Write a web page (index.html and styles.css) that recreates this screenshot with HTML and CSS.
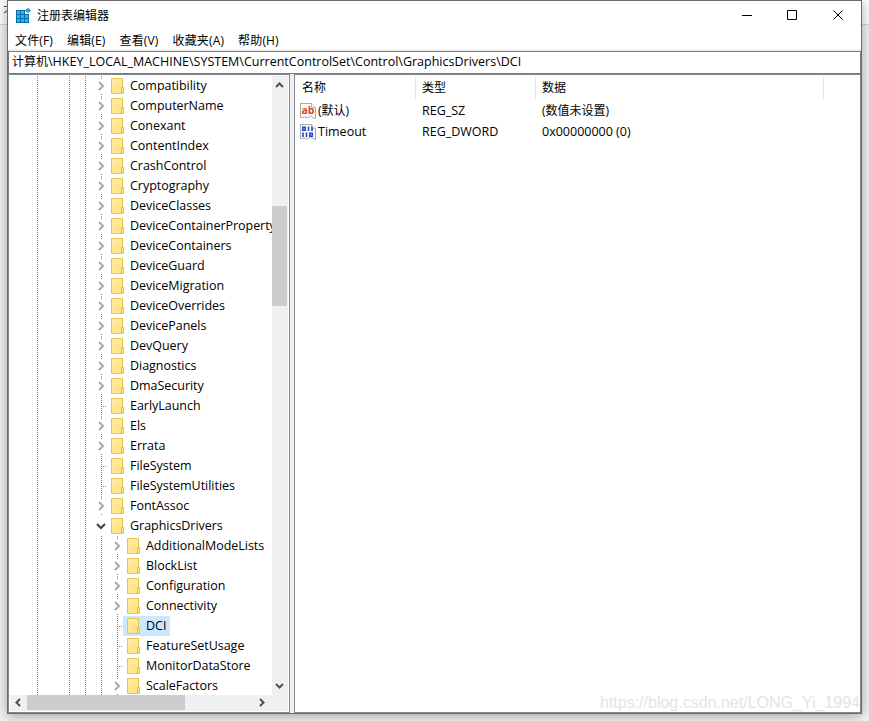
FILE: index.html
```html
<!DOCTYPE html>
<html lang="zh-CN">
<head>
    <meta charset="UTF-8">
    <meta name="viewport" content="width=device-width, initial-scale=1.0">
    <title>注册表编辑器</title>
    <link rel="stylesheet" href="styles.css">
</head>
<body>
    <svg class="symbols">
        <symbol id="folder" viewBox="0 0 16 16">
            <linearGradient id="paper" x1="0" y1="0" x2="1" y2="1">
                <stop offset="0" stop-color="#ffeda6"/>
                <stop offset="1" stop-color="#ffe07c"/>
            </linearGradient>
            <path d="M.5.5h11v9h1v6H.5z" fill="url(#paper)" stroke="#edc54e"/>
            <path d="M10.500 15V9.500h2V15" fill="#ffe48b" stroke="#e8bd43"/>
        </symbol>
        <symbol id="closed" viewBox="0 0 8 10">
            <path d="M2 1l4 4-4 4" fill="none" stroke="#a6a6a6" stroke-width="2"/>
        </symbol>
        <symbol id="open" viewBox="0 0 10 8">
            <path d="M1 2l4 4 4-4" fill="none" stroke="#404040" stroke-width="2"/>
        </symbol>
        <symbol id="sheet" viewBox="0 0 16 16">
            <path d="M.5.5h11l4 4v11l-3-1-2-1.500-3 2-3-1-2 .500H.5z" fill="#fafafa" stroke="#a8a8a8"/>
            <path d="M11.500.5v4h4" fill="#fff" stroke="#b8b8b8"/>
        </symbol>
    </svg>

    <div class="desktop">
        <div class="behind">不</div>
        <div class="window">
            <div class="titlebar">
                <svg class="app-icon" width="16" height="16" viewBox="0 0 16 16">
                    <path d="M1 2h9v4h4v9H1z" fill="#0a6fa8"/>
                    <g fill="#2fb4ea">
                        <path d="M2 3h3v3H2zM6 3h3v3H6z"/>
                        <path d="M2 7h3v3H2zM6 7h3v3H6zM10 7h3v3h-3z"/>
                        <path d="M2 11h3v3H2zM6 11h3v3H6zM10 11h3v3h-3z"/>
                    </g>
                    <path d="M13 0l3 2.500L13 5l-3-2.500z" fill="#0a78b4"/>
                    <path d="M13 1.200l1.400 1.300L13 3.800l-1.400-1.300z" fill="#5fd0f8"/>
                </svg>
                <span class="title">注册表编辑器</span>
                <div class="controls">
                    <svg width="46" height="29" viewBox="0 0 46 29"><path d="M18 14.500h10"/></svg>
                    <svg width="46" height="29" viewBox="0 0 46 29"><path d="M17.500 9.500h9v9h-9z"/></svg>
                    <svg width="46" height="29" viewBox="0 0 46 29"><path d="M17.500 9.500l9 9m0-9l-9 9"/></svg>
                </div>
            </div>
            <div class="menubar">
                <span>文件(F)</span>
                <span>编辑(E)</span>
                <span>查看(V)</span>
                <span>收藏夹(A)</span>
                <span>帮助(H)</span>
            </div>
            <div class="address">计算机<span class="path">\HKEY_LOCAL_MACHINE\SYSTEM\CurrentControlSet\Control\GraphicsDrivers\DCI</span></div>

            <div class="panes">
                <div class="tree-pane">
                    <div class="tree-area">
                        <div class="tree">
                            <div class="guides"><i></i><i></i><i></i></div>
                            <ul class="keys">
                                <li><svg class="arrow"><use href="#closed"/></svg><svg class="folder"><use href="#folder"/></svg><span>Compatibility</span></li>
                                <li><svg class="arrow"><use href="#closed"/></svg><svg class="folder"><use href="#folder"/></svg><span>ComputerName</span></li>
                                <li><svg class="arrow"><use href="#closed"/></svg><svg class="folder"><use href="#folder"/></svg><span>Conexant</span></li>
                                <li><svg class="arrow"><use href="#closed"/></svg><svg class="folder"><use href="#folder"/></svg><span>ContentIndex</span></li>
                                <li><svg class="arrow"><use href="#closed"/></svg><svg class="folder"><use href="#folder"/></svg><span>CrashControl</span></li>
                                <li><svg class="arrow"><use href="#closed"/></svg><svg class="folder"><use href="#folder"/></svg><span>Cryptography</span></li>
                                <li><svg class="arrow"><use href="#closed"/></svg><svg class="folder"><use href="#folder"/></svg><span>DeviceClasses</span></li>
                                <li><svg class="arrow"><use href="#closed"/></svg><svg class="folder"><use href="#folder"/></svg><span>DeviceContainerProperty</span></li>
                                <li><svg class="arrow"><use href="#closed"/></svg><svg class="folder"><use href="#folder"/></svg><span>DeviceContainers</span></li>
                                <li><svg class="arrow"><use href="#closed"/></svg><svg class="folder"><use href="#folder"/></svg><span>DeviceGuard</span></li>
                                <li><svg class="arrow"><use href="#closed"/></svg><svg class="folder"><use href="#folder"/></svg><span>DeviceMigration</span></li>
                                <li><svg class="arrow"><use href="#closed"/></svg><svg class="folder"><use href="#folder"/></svg><span>DeviceOverrides</span></li>
                                <li><svg class="arrow"><use href="#closed"/></svg><svg class="folder"><use href="#folder"/></svg><span>DevicePanels</span></li>
                                <li><svg class="arrow"><use href="#closed"/></svg><svg class="folder"><use href="#folder"/></svg><span>DevQuery</span></li>
                                <li><svg class="arrow"><use href="#closed"/></svg><svg class="folder"><use href="#folder"/></svg><span>Diagnostics</span></li>
                                <li><svg class="arrow"><use href="#closed"/></svg><svg class="folder"><use href="#folder"/></svg><span>DmaSecurity</span></li>
                                <li class="leaf"><svg class="folder"><use href="#folder"/></svg><span>EarlyLaunch</span></li>
                                <li><svg class="arrow"><use href="#closed"/></svg><svg class="folder"><use href="#folder"/></svg><span>Els</span></li>
                                <li><svg class="arrow"><use href="#closed"/></svg><svg class="folder"><use href="#folder"/></svg><span>Errata</span></li>
                                <li class="leaf"><svg class="folder"><use href="#folder"/></svg><span>FileSystem</span></li>
                                <li class="leaf"><svg class="folder"><use href="#folder"/></svg><span>FileSystemUtilities</span></li>
                                <li><svg class="arrow"><use href="#closed"/></svg><svg class="folder"><use href="#folder"/></svg><span>FontAssoc</span></li>
                                <li><svg class="arrow expanded"><use href="#open"/></svg><svg class="folder"><use href="#folder"/></svg><span>GraphicsDrivers</span></li>
                                <li class="child"><svg class="arrow"><use href="#closed"/></svg><svg class="folder"><use href="#folder"/></svg><span>AdditionalModeLists</span></li>
                                <li class="child"><svg class="arrow"><use href="#closed"/></svg><svg class="folder"><use href="#folder"/></svg><span>BlockList</span></li>
                                <li class="child"><svg class="arrow"><use href="#closed"/></svg><svg class="folder"><use href="#folder"/></svg><span>Configuration</span></li>
                                <li class="child"><svg class="arrow"><use href="#closed"/></svg><svg class="folder"><use href="#folder"/></svg><span>Connectivity</span></li>
                                <li class="child leaf selected"><svg class="folder"><use href="#folder"/></svg><span>DCI</span></li>
                                <li class="child leaf"><svg class="folder"><use href="#folder"/></svg><span>FeatureSetUsage</span></li>
                                <li class="child leaf"><svg class="folder"><use href="#folder"/></svg><span>MonitorDataStore</span></li>
                                <li class="child"><svg class="arrow"><use href="#closed"/></svg><svg class="folder"><use href="#folder"/></svg><span>ScaleFactors</span></li>
                            </ul>
                        </div>
                        <div class="vscroll">
                            <svg width="16" height="17" viewBox="0 0 16 17"><path d="M4 11l3.500-3.500L11 11"/></svg>
                            <div class="thumb"></div>
                            <svg width="16" height="17" viewBox="0 0 16 17"><path d="M4 6l3.500 3.500L11 6"/></svg>
                        </div>
                    </div>
                    <div class="hscroll">
                        <svg width="17" height="16" viewBox="0 0 17 16"><path d="M10 4L6.500 7.500 10 11"/></svg>
                        <div class="thumb"></div>
                        <svg width="17" height="16" viewBox="0 0 17 16"><path d="M6 4l3.500 3.500L6 11"/></svg>
                    </div>
                </div>

                <div class="list-pane">
                    <div class="row head"><span>名称</span><span>类型</span><span>数据</span></div>
                    <div class="row">
                        <div class="name">
                            <svg width="16" height="16"><use href="#sheet"/><text x="1.500" y="11" class="ab">ab</text></svg>
                            <span>(默认)</span>
                        </div>
                        <span class="latin">REG_SZ</span>
                        <span>(数值未设置)</span>
                    </div>
                    <div class="row">
                        <div class="name">
                            <svg width="16" height="16"><use href="#sheet"/><path class="bits" d="M2.800 3.300h2.400v2.900H2.800zM8.500 2.500V7M12 2.500V7M3 8.500V13M6.500 8.500V13M9.800 9.300h2.400v2.900H9.800z"/></svg>
                            <span class="latin">Timeout</span>
                        </div>
                        <span class="latin">REG_DWORD</span>
                        <span class="latin">0x00000000 (0)</span>
                    </div>
                </div>
            </div>
        </div>
        <div class="watermark">https://blog.csdn.net/LONG_Yi_1994</div>
    </div>
</body>
</html>
```

FILE: styles.css
```css
* {
    box-sizing: border-box;
}

body {
    margin: 0;
    font-family: "Open Sans", "Noto Sans CJK SC", sans-serif;
    font-size: 12px;
    color: #000;
}

svg {
    display: block;
    flex: none;
}

.symbols {
    position: absolute;
    width: 0;
    height: 0;
}

.desktop {
    position: relative;
    width: 869px;
    height: 721px;
    padding-left: 7px;
    overflow: hidden;
    background: linear-gradient(#fff 24px, #d4d4d4 24px, #d4d4d4 25px, #f3f3f3 25px);
}

.behind {
    position: absolute;
    left: 3px;
    top: 2px;
    color: #555;
}

.window {
    position: relative;
    display: flex;
    flex-direction: column;
    width: 855px;
    height: 714px;
    border: 1px solid #6b6b6b;
    background: #fff;
    box-shadow: 0 2px 12px rgba(0, 0, 0, 0.35);
}

/* title bar and menu */
.titlebar {
    display: flex;
    align-items: center;
    height: 29px;
    padding-left: 7px;
}

.title {
    margin: -2px 0 0 6px;
}

.controls {
    display: flex;
    margin: 0 -1px 0 auto;
}

.controls path {
    fill: none;
    stroke: #000;
}

.menubar {
    display: flex;
    gap: 14px;
    height: 21px;
    padding-left: 7px;
    line-height: 21px;
    letter-spacing: 0.15px;
    border-bottom: 2px solid #f0f0f0;
}

.address {
    height: 23px;
    padding-left: 3px;
    line-height: 20px;
    border: 1px solid #7a7a7a;
    white-space: nowrap;
}

.path,
.latin {
    font-size: 12.5px;
}

.panes {
    display: flex;
    flex: 1;
    gap: 4px;
    background: #f0f0f0;
}

/* key tree */
.tree-pane {
    display: flex;
    flex-direction: column;
    width: 282px;
    padding: 1px;
    border: 1px solid #828790;
    background: #fff;
}

.tree-area {
    display: flex;
    height: 619px;
}

.tree {
    display: flex;
    width: 262px;
    overflow: hidden;
}

.guides {
    display: flex;
    width: 84px;
    flex: none;
    padding-left: 27px;
}

.guides i {
    flex: none;
    width: 16px;
    background: repeating-linear-gradient(#808080 0 1px, #fff 1px 2px) 0 0 / 1px 100% no-repeat;
}

.guides i:first-child {
    width: 32px;
}

.keys {
    margin: 0;
    padding: 0;
    list-style: none;
    font-size: 12.5px;
    letter-spacing: -0.03px;
}

.keys li {
    display: flex;
    align-items: center;
    height: 20px;
    padding-left: 2px;
    line-height: 20px;
    white-space: nowrap;
    background: repeating-linear-gradient(#808080 0 1px, #fff 1px 2px) 7px 0 / 1px 100% no-repeat;
}

.keys .child {
    padding-left: 18px;
    background:
        repeating-linear-gradient(#808080 0 1px, #fff 1px 2px) 7px 0 / 1px 100% no-repeat,
        repeating-linear-gradient(#808080 0 1px, #fff 1px 2px) 23px 0 / 1px 100% no-repeat;
}

.arrow {
    width: 10px;
    height: 14px;
    padding: 2px 1px;
    background: #fff;
}

.arrow.expanded {
    height: 20px;
    padding: 6px 0;
}

.folder {
    width: 16px;
    height: 16px;
    margin-left: 5px;
}

.leaf::before {
    content: "";
    width: 5px;
    height: 1px;
    margin-left: 5px;
    background: repeating-linear-gradient(90deg, #808080 0 1px, #fff 1px 2px);
}

.keys span {
    padding: 0 4px 0 3px;
}

.selected .folder {
    height: 20px;
    padding: 2px 0;
    box-shadow: -4px 0 #cce8ff;
    background: #cce8ff;
}

.selected span {
    background: #cce8ff;
}

/* scroll bars */
.vscroll,
.hscroll {
    display: flex;
    background: #f0f0f0;
}

.vscroll {
    flex-direction: column;
    width: 16px;
}

.vscroll svg:last-child {
    margin-top: auto;
}

.hscroll svg:last-child {
    margin-left: auto;
}

.vscroll path,
.hscroll path {
    fill: none;
    stroke: #505050;
    stroke-width: 2;
}

.thumb {
    background: #cdcdcd;
}

.vscroll .thumb {
    width: 15px;
    height: 100px;
    margin-top: 113px;
}

.hscroll {
    height: 16px;
    padding-right: 17px;
}

.hscroll .thumb {
    width: 158px;
    height: 15px;
}

/* value list */
.list-pane {
    flex: 1;
    padding: 1px 0 0 1px;
    border: 1px solid #828790;
    background: #fff;
}

.row {
    display: grid;
    grid-template-columns: 120px 120px 288px;
    height: 21px;
    line-height: 21px;
}

.row > span {
    padding-left: 6px;
}

.head {
    height: 24px;
    line-height: 23px;
}

.head span {
    border-right: 1px solid #e5e5e5;
}

.name {
    display: flex;
    align-items: center;
    gap: 2px;
    padding-left: 4px;
}

.ab {
    font: bold 10.5px "Open Sans", sans-serif;
    fill: #d9472b;
}

.bits {
    fill: none;
    stroke: #2447c8;
    stroke-width: 1.6;
}

.watermark {
    position: absolute;
    right: 9px;
    bottom: 9px;
    font: 16px/18px "Liberation Sans", sans-serif;
    color: #e4e4e4;
}
```
